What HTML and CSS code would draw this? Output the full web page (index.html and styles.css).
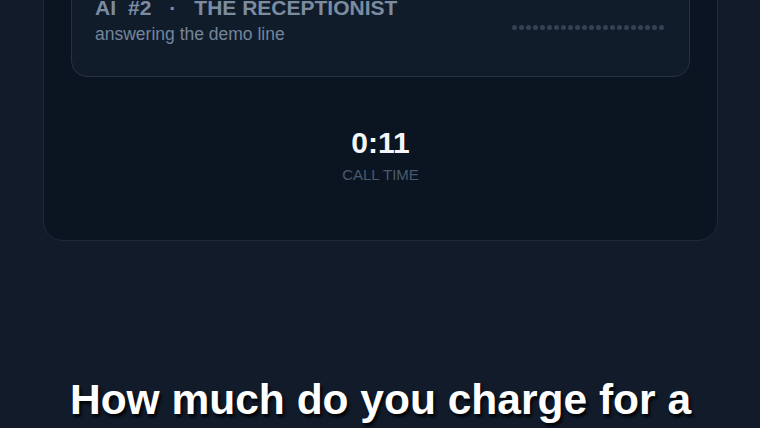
FILE: index.html
```html
<!DOCTYPE html>
<html lang="en">

<head>
    <meta charset="UTF-8">
    <meta name="viewport" content="width=device-width, initial-scale=1.0">
    <title>Demo Call</title>
    <link rel="stylesheet" href="styles.css">
</head>

<body>
    <div class="stage">
        <div class="panel">
            <div class="caller">
                <div class="caller-info">
                    <div class="caller-title">
                        <span>AI</span>
                        <span>#2</span>
                        <span class="sep">&middot;</span>
                        <span>THE RECEPTIONIST</span>
                    </div>
                    <div class="caller-sub">answering the demo line</div>
                </div>
                <div class="wave" id="wave"></div>
            </div>

            <div class="timer">
                <div class="timer-value">0:11</div>
                <div class="timer-label">CALL TIME</div>
            </div>
        </div>

        <p class="caption">How much do you charge for a<br>full detail?</p>
    </div>

    <script>
        // idle waveform: a row of flat dots
        const wave = document.getElementById('wave');
        for (let i = 0; i < 22; i++) {
            const dot = document.createElement('span');
            dot.className = 'dot';
            wave.appendChild(dot);
        }
    </script>
</body>

</html>
```

FILE: styles.css
```css
body {
    font-family: "Liberation Sans", Arial, sans-serif;
    margin: 0;
    padding: 0;
    background-color: #111b2a;
    overflow: hidden;
}

.stage {
    padding: 0 42px 0 43px;
}

.panel {
    margin-top: -54px;
    padding: 28px 27px 56px;
    background: #0b1522;
    border: 1px solid #1e2a3a;
    border-radius: 20px;
}

.caller {
    display: flex;
    align-items: center;
    justify-content: space-between;
    padding: 20px 25px 32px 23px;
    background: #111c2b;
    border: 1px solid #243245;
    border-radius: 16px;
}

.caller-title {
    display: flex;
    gap: 12px;
    font-size: 21px;
    line-height: 24px;
    font-weight: bold;
    color: #7b8ca1;
}

.caller-title .sep {
    margin: 0 6px 0 6px;
}

.caller-sub {
    margin-top: 4px;
    font-size: 17.5px;
    line-height: 20px;
    color: #74859a;
}

.wave {
    display: flex;
    gap: 2px;
    margin-top: 14px;
}

.dot {
    width: 5px;
    height: 5px;
    border-radius: 50%;
    background: #344153;
}

.timer {
    margin-top: 49px;
    text-align: center;
}

.timer-value {
    font-size: 30px;
    line-height: 34px;
    font-weight: bold;
    color: #f4f6f9;
}

.timer-label {
    margin-top: 6px;
    font-size: 15px;
    line-height: 18px;
    color: #4a5a6e;
}

.caption {
    margin: 134px 0 0;
    text-align: center;
    font-size: 42.5px;
    line-height: 50px;
    font-weight: bold;
    color: #ffffff;
    text-shadow: 2px 3px 3px rgba(0, 0, 0, 0.85);
}
```
